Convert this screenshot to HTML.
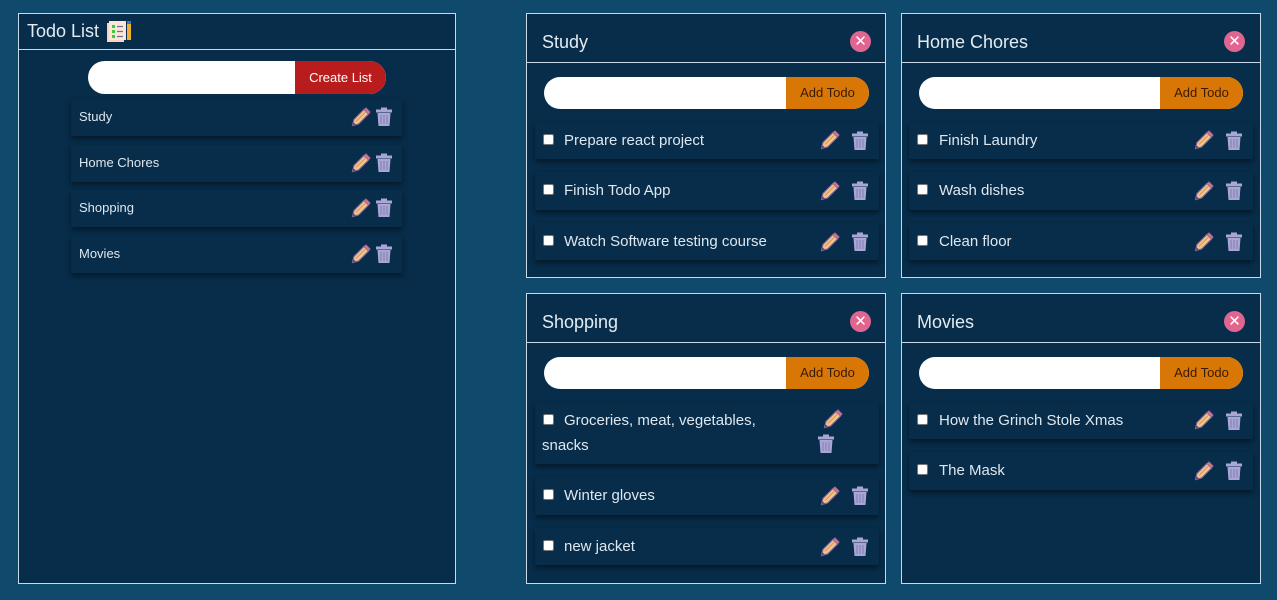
<!DOCTYPE html>
<html><head><meta charset="utf-8"><style>
*{box-sizing:border-box;margin:0;padding:0}
body{width:1277px;height:600px;background:#0f4a6d;font-family:"Liberation Sans",sans-serif;color:#e8eef4;position:relative;overflow:hidden}
.p{position:absolute;background:#072d4a;border:1px solid #c9d8e6}
.hl{position:absolute;left:0;right:0;height:1px;background:#c9d8e6}
.t{position:absolute;font-size:18px;color:#e4ecf2}
.cl{position:absolute;width:21px;height:21px;border-radius:50%;background:#e0668f;color:#fff;font-size:15px;line-height:21px;text-align:center}
.in{position:absolute;background:#fff;border-radius:17px;overflow:hidden}
.btn{position:absolute;right:0;top:0;bottom:0;font-size:13px;text-align:center}
.it{position:absolute;background:#072d4a;box-shadow:0 3px 5px rgba(0,0,0,.45)}
.cb{position:absolute;width:11px;height:11px;background:#fff;border:1px solid #777;border-radius:2px}
.tx{position:absolute;font-size:15px;color:#dfe7ee}
.ic{position:absolute}
</style></head><body>
<svg width="0" height="0" style="position:absolute"><defs>
<g id="pen"><path d="M1.5 18.5 L3 12.5 L13 2.5 L17.5 7 L7.5 17 Z" fill="#f3c58c" stroke="#8a6a9a" stroke-width="1.2"/><path d="M5 14.5 L14.5 5" stroke="#d99a5a" stroke-width="1.2"/><path d="M13 2.5 L15 0.8 L19.2 5 L17.5 7Z" fill="#e66b8a" stroke="#8a6a9a" stroke-width="0.8"/><path d="M1.5 18.5 L2.4 15 L5 17.6Z" fill="#6a4a7a"/></g>
<g id="bin"><rect x="6" y="0.5" width="6" height="2" fill="#a9a6d6"/><rect x="1" y="2.5" width="16" height="3" fill="#a9a6d6"/><path d="M2.5 6 H15.5 L14.5 19 H3.5Z" fill="#a9a6d6"/><path d="M6 8V17M9 8V17M12 8V17" stroke="#7f7cb0" stroke-width="1"/></g>
</defs></svg>

<!-- left panel -->
<div class="p" style="left:18px;top:13px;width:438px;height:571px">
 <div class="t" style="left:8px;top:7px;font-size:18px">Todo List</div>
 <svg class="ic" style="left:87px;top:6px" width="26" height="24"><rect x="1" y="3" width="17" height="19" fill="#f7d3c0"/><rect x="3" y="1" width="17" height="19" fill="#fde6d6"/><rect x="6" y="5" width="3" height="3" fill="#3cc84a"/><rect x="6" y="10" width="3" height="3" fill="#3cc84a"/><rect x="6" y="15" width="3" height="3" fill="#3cc84a"/><path d="M11 6.5H17M11 11.5H17M11 16.5H17" stroke="#7a6a9a" stroke-width="1.3"/><rect x="21" y="3" width="4" height="17" fill="#f0b030"/><rect x="21" y="1" width="4" height="3" fill="#2a7ad0"/></svg>
 <div class="hl" style="top:35px"></div>
 <div class="in" style="left:69px;top:47px;width:298px;height:33px"><div class="btn" style="width:91px;background:#b91c1c;color:#fff;line-height:33px">Create List</div></div>
 <div class="it" style="left:52px;top:85px;width:331px;height:37px"><div class="tx" style="left:8px;top:10px;font-size:13px">Study</div><svg class="ic" style="left:280px;top:8px" width="20" height="20"><use href="#pen"/></svg><svg class="ic" style="left:304px;top:8px" width="18" height="20"><use href="#bin"/></svg></div>
 <div class="it" style="left:52px;top:131px;width:331px;height:37px"><div class="tx" style="left:8px;top:10px;font-size:13px">Home Chores</div><svg class="ic" style="left:280px;top:8px" width="20" height="20"><use href="#pen"/></svg><svg class="ic" style="left:304px;top:8px" width="18" height="20"><use href="#bin"/></svg></div>
 <div class="it" style="left:52px;top:176px;width:331px;height:37px"><div class="tx" style="left:8px;top:10px;font-size:13px">Shopping</div><svg class="ic" style="left:280px;top:8px" width="20" height="20"><use href="#pen"/></svg><svg class="ic" style="left:304px;top:8px" width="18" height="20"><use href="#bin"/></svg></div>
 <div class="it" style="left:52px;top:222px;width:331px;height:37px"><div class="tx" style="left:8px;top:10px;font-size:13px">Movies</div><svg class="ic" style="left:280px;top:8px" width="20" height="20"><use href="#pen"/></svg><svg class="ic" style="left:304px;top:8px" width="18" height="20"><use href="#bin"/></svg></div>
</div>

<!-- Study -->
<div class="p" style="left:526px;top:13px;width:360px;height:265px">
 <div class="t" style="left:15px;top:18px">Study</div><div class="cl" style="left:323px;top:17px">✕</div>
 <div class="hl" style="top:48px"></div>
 <div class="in" style="left:17px;top:63px;width:325px;height:32px"><div class="btn" style="width:83px;background:#d97706;color:#3a1a00;line-height:32px">Add Todo</div></div>
 <div class="it" style="left:8px;top:108px;width:344px;height:37px"><div class="cb" style="left:8px;top:12px"></div><div class="tx" style="left:29px;top:10px">Prepare react project</div><svg class="ic" style="left:285px;top:8px" width="20" height="20"><use href="#pen"/></svg><svg class="ic" style="left:316px;top:9px" width="18" height="20"><use href="#bin"/></svg></div>
 <div class="it" style="left:8px;top:158px;width:344px;height:38px"><div class="cb" style="left:8px;top:12px"></div><div class="tx" style="left:29px;top:10px">Finish Todo App</div><svg class="ic" style="left:285px;top:9px" width="20" height="20"><use href="#pen"/></svg><svg class="ic" style="left:316px;top:9px" width="18" height="20"><use href="#bin"/></svg></div>
 <div class="it" style="left:8px;top:209px;width:344px;height:37px"><div class="cb" style="left:8px;top:12px"></div><div class="tx" style="left:29px;top:10px">Watch Software testing course</div><svg class="ic" style="left:285px;top:9px" width="20" height="20"><use href="#pen"/></svg><svg class="ic" style="left:316px;top:9px" width="18" height="20"><use href="#bin"/></svg></div>
</div>

<!-- Home Chores -->
<div class="p" style="left:901px;top:13px;width:360px;height:265px">
 <div class="t" style="left:15px;top:18px">Home Chores</div><div class="cl" style="left:322px;top:17px">✕</div>
 <div class="hl" style="top:48px"></div>
 <div class="in" style="left:17px;top:63px;width:324px;height:32px"><div class="btn" style="width:83px;background:#d97706;color:#3a1a00;line-height:32px">Add Todo</div></div>
 <div class="it" style="left:7px;top:108px;width:344px;height:37px"><div class="cb" style="left:8px;top:12px"></div><div class="tx" style="left:30px;top:10px">Finish Laundry</div><svg class="ic" style="left:285px;top:8px" width="20" height="20"><use href="#pen"/></svg><svg class="ic" style="left:316px;top:9px" width="18" height="20"><use href="#bin"/></svg></div>
 <div class="it" style="left:7px;top:158px;width:344px;height:38px"><div class="cb" style="left:8px;top:12px"></div><div class="tx" style="left:30px;top:10px">Wash dishes</div><svg class="ic" style="left:285px;top:9px" width="20" height="20"><use href="#pen"/></svg><svg class="ic" style="left:316px;top:9px" width="18" height="20"><use href="#bin"/></svg></div>
 <div class="it" style="left:7px;top:209px;width:344px;height:37px"><div class="cb" style="left:8px;top:12px"></div><div class="tx" style="left:30px;top:10px">Clean floor</div><svg class="ic" style="left:285px;top:9px" width="20" height="20"><use href="#pen"/></svg><svg class="ic" style="left:316px;top:9px" width="18" height="20"><use href="#bin"/></svg></div>
</div>

<!-- Shopping -->
<div class="p" style="left:526px;top:293px;width:360px;height:291px">
 <div class="t" style="left:15px;top:18px">Shopping</div><div class="cl" style="left:323px;top:17px">✕</div>
 <div class="hl" style="top:48px"></div>
 <div class="in" style="left:17px;top:63px;width:325px;height:32px"><div class="btn" style="width:83px;background:#d97706;color:#3a1a00;line-height:32px">Add Todo</div></div>
 <div class="it" style="left:8px;top:108px;width:344px;height:62px"><div class="cb" style="left:8px;top:12px"></div><div class="tx" style="left:29px;top:10px">Groceries, meat, vegetables,</div><div class="tx" style="left:7px;top:35px">snacks</div><svg class="ic" style="left:288px;top:7px" width="20" height="20"><use href="#pen"/></svg><svg class="ic" style="left:282px;top:32px" width="18" height="20"><use href="#bin"/></svg></div>
 <div class="it" style="left:8px;top:183px;width:344px;height:38px"><div class="cb" style="left:8px;top:12px"></div><div class="tx" style="left:29px;top:10px">Winter gloves</div><svg class="ic" style="left:285px;top:9px" width="20" height="20"><use href="#pen"/></svg><svg class="ic" style="left:316px;top:9px" width="18" height="20"><use href="#bin"/></svg></div>
 <div class="it" style="left:8px;top:234px;width:344px;height:37px"><div class="cb" style="left:8px;top:12px"></div><div class="tx" style="left:29px;top:10px">new jacket</div><svg class="ic" style="left:285px;top:9px" width="20" height="20"><use href="#pen"/></svg><svg class="ic" style="left:316px;top:9px" width="18" height="20"><use href="#bin"/></svg></div>
</div>

<!-- Movies -->
<div class="p" style="left:901px;top:293px;width:360px;height:291px">
 <div class="t" style="left:15px;top:18px">Movies</div><div class="cl" style="left:322px;top:17px">✕</div>
 <div class="hl" style="top:48px"></div>
 <div class="in" style="left:17px;top:63px;width:324px;height:32px"><div class="btn" style="width:83px;background:#d97706;color:#3a1a00;line-height:32px">Add Todo</div></div>
 <div class="it" style="left:7px;top:108px;width:344px;height:37px"><div class="cb" style="left:8px;top:12px"></div><div class="tx" style="left:30px;top:10px">How the Grinch Stole Xmas</div><svg class="ic" style="left:285px;top:8px" width="20" height="20"><use href="#pen"/></svg><svg class="ic" style="left:316px;top:9px" width="18" height="20"><use href="#bin"/></svg></div>
 <div class="it" style="left:7px;top:158px;width:344px;height:38px"><div class="cb" style="left:8px;top:12px"></div><div class="tx" style="left:30px;top:10px">The Mask</div><svg class="ic" style="left:285px;top:9px" width="20" height="20"><use href="#pen"/></svg><svg class="ic" style="left:316px;top:9px" width="18" height="20"><use href="#bin"/></svg></div>
</div>
</body></html>
